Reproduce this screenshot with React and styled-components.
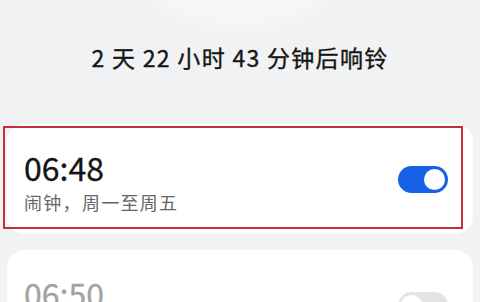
import React from 'react';
import styled, { createGlobalStyle } from 'styled-components';

const GlobalStyle = createGlobalStyle`
  html, body {
    margin: 0;
    padding: 0;
    background: #f1f2f4;
    font-family: "Noto Sans", "Noto Sans CJK SC", sans-serif;
    overflow: hidden;
  }
`;

const Screen = styled.div`
  width: 480px;
  height: 302px;
  overflow: hidden;
  background: #f1f2f4;
  display: flex;
  flex-direction: column;
`;

const Header = styled.div`
  position: relative;
  height: 124px;
  display: flex;
  align-items: flex-start;
  justify-content: center;
  flex-shrink: 0;
`;

const DialGlow = styled.div`
  position: absolute;
  left: 110px;
  top: -150px;
  width: 260px;
  height: 185px;
  border-radius: 50%;
  background: radial-gradient(ellipse at center, #fbfbfd 0%, #f6f7f9 55%, rgba(241, 242, 244, 0) 72%);
`;

const Countdown = styled.div`
  position: relative;
  margin-top: 40px;
  font-size: 23px;
  font-weight: 400;
  letter-spacing: 1.3px;
  color: #151515;
  -webkit-text-stroke: 0.35px #151515;
  font-family: "Noto Sans CJK SC", sans-serif;
`;

const List = styled.div`
  display: flex;
  flex-direction: column;
  gap: 16px;
  padding: 0 7px;
`;

const Card = styled.div`
  position: relative;
  background: #fff;
  border-radius: 18px;
  height: 110px;
  padding: 0 25px 0 17px;
  display: flex;
  align-items: center;
  justify-content: space-between;
  flex-shrink: 0;
`;

const Highlight = styled.div`
  position: absolute;
  left: -4px;
  top: 2px;
  width: 460px;
  height: 103px;
  box-sizing: border-box;
  border: 2.5px solid #c6303a;
  pointer-events: none;
`;

const Info = styled.div`
  display: flex;
  flex-direction: column;
  margin-top: 4px;
`;

const Time = styled.div`
  font-size: 32px;
  font-weight: 400;
  line-height: 38px;
  color: ${p => (p.$on ? '#141414' : '#a3a3a3')};
  -webkit-text-stroke: 0.3px ${p => (p.$on ? '#141414' : '#a3a3a3')};
  font-family: "Noto Sans CJK SC", sans-serif;
`;

const Label = styled.div`
  margin-top: 4px;
  font-size: 18px;
  letter-spacing: 1.3px;
  line-height: 24px;
  color: #666;
  font-family: "Noto Sans CJK SC", sans-serif;
`;

const Switch = styled.div`
  width: 50px;
  height: 27px;
  border-radius: 14px;
  box-sizing: border-box;
  background: ${p => (p.$on ? '#1761e6' : '#e3e4e6')};
  display: flex;
  align-items: center;
  justify-content: ${p => (p.$on ? 'flex-end' : 'flex-start')};
  padding: 0 1px;
`;

const Knob = styled.div`
  width: 25px;
  height: 25px;
  border-radius: 50%;
  background: #fff;
  box-sizing: border-box;
  border: 2px solid ${p => (p.$on ? '#1761e6' : '#e3e4e6')};
`;

const alarms = [
  { time: '06:48', label: '闹钟，周一至周五', on: true, marked: true },
  { time: '06:50', label: '闹钟，周一至周五', on: false },
];

export default function App() {
  return (
    <Screen>
      <GlobalStyle />
      <Header>
        <DialGlow />
        <Countdown>2 天 22 小时 43 分钟后响铃</Countdown>
      </Header>
      <List>
        {alarms.map(a => (
          <Card key={a.time}>
            <Info>
              <Time $on={a.on}>{a.time}</Time>
              <Label>{a.label}</Label>
            </Info>
            <Switch $on={a.on}>
              <Knob $on={a.on} />
            </Switch>
            {a.marked && <Highlight />}
          </Card>
        ))}
      </List>
    </Screen>
  );
}
